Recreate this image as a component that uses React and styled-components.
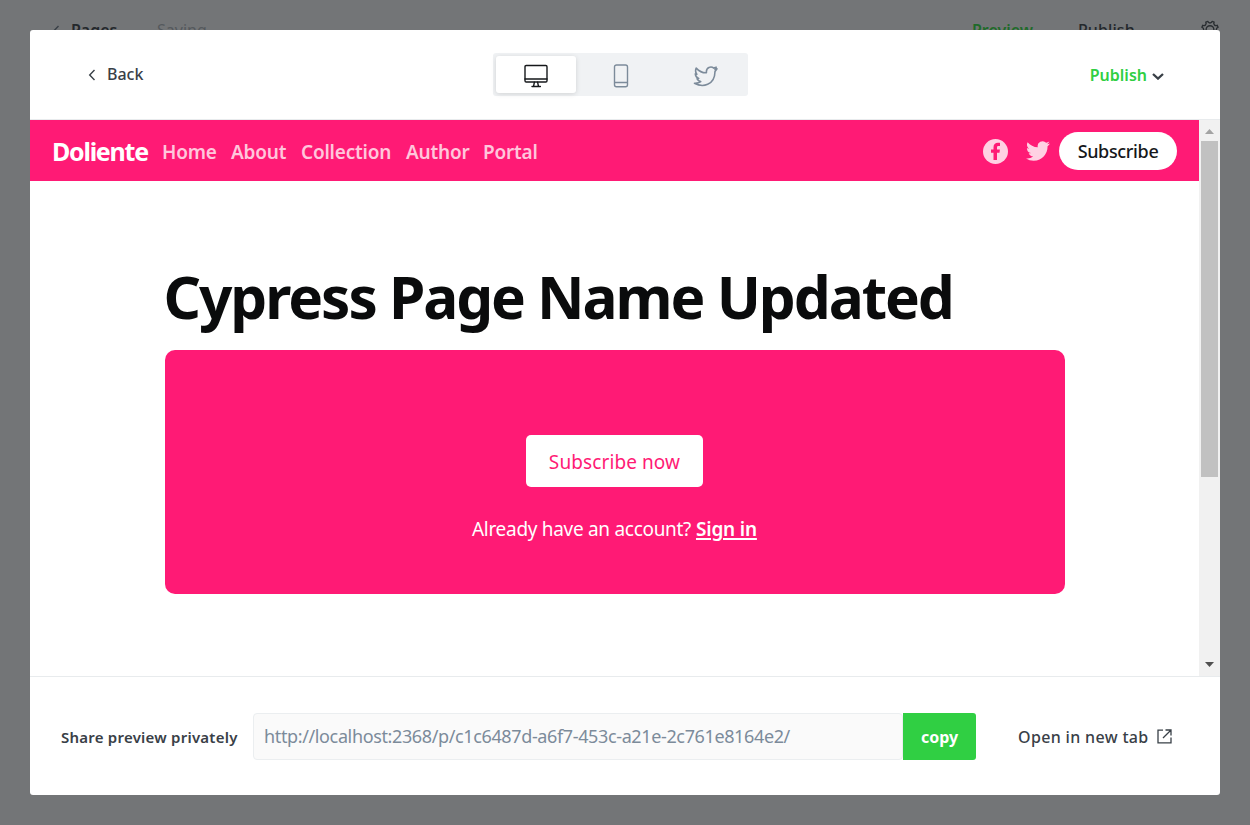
import React from "react";
import styled, { createGlobalStyle } from "styled-components";

const GlobalStyle = createGlobalStyle`
  * { box-sizing: border-box; }
  html, body { margin: 0; height: 100%; overflow: hidden; }
  body { background: #737577; font-family: "Noto Sans", "Open Sans", sans-serif; color: #394047; }
  button { font-family: inherit; border: 0; padding: 0; background: none; color: inherit; }
  svg { display: block; flex: none; }
`;

const Screen = styled.div`
  position: relative;
  width: 1250px;
  height: 825px;
  background: #737577;
`;

const EditorBar = styled.header`
  display: flex;
  align-items: center;
  height: 60px;
  padding: 0 30px 0 52px;
`;

const Label = styled.span`
  display: block;
  flex: none;
  white-space: nowrap;
  width: ${(p) => (p.$w ? `${p.$w}px` : "auto")};
  padding-top: ${(p) => p.$drop || 0}px;
  font-size: ${(p) => p.$size || 16}px;
  font-weight: ${(p) => p.$weight || 400};
  letter-spacing: ${(p) => p.$track || 0}px;
  color: ${(p) => p.$color || "inherit"};
  line-height: 1.4;
`;

const Modal = styled.main`
  position: absolute;
  inset: 30px;
  display: flex;
  flex-direction: column;
  background: #fff;
  border-radius: 3px;
  overflow: hidden;
`;

const ModalHeader = styled.div`
  display: grid;
  grid-template-columns: 405px 255px 1fr;
  align-items: center;
  height: 90px;
  flex: none;
  padding: 0 56px 0 58px;
  border-bottom: 1px solid #e8ebed;
`;

const BackButton = styled.button`
  display: flex;
  align-items: center;
  gap: 11px;
`;

const Devices = styled.div`
  display: flex;
  height: 43px;
  padding: 3px 0 3px 3px;
  border-radius: 3px;
  background: #f0f2f4;
`;

const Device = styled.button`
  display: flex;
  flex: none;
  align-items: center;
  justify-content: center;
  width: ${(p) => (p.$active ? 80 : 85)}px;
  height: 37px;
  padding-top: 3px;
  margin-right: ${(p) => (p.$active ? 2 : 0)}px;
  border-radius: 3px;
  color: ${(p) => (p.$active ? "#15171a" : "#7c8b9a")};
  background: ${(p) => (p.$active ? "#fff" : "transparent")};
  box-shadow: ${(p) => (p.$active ? "0 1px 5px rgba(0, 0, 0, 0.13)" : "none")};
`;

const PublishMenu = styled.button`
  display: flex;
  align-items: center;
  justify-self: end;
  gap: 5px;
  padding-top: 2px;
`;

const Preview = styled.section`
  display: flex;
  height: 556px;
  flex: none;
`;

const Site = styled.div`
  width: 1169px;
  flex: none;
`;

const SiteNav = styled.nav`
  display: flex;
  align-items: center;
  height: 61px;
  padding: 1px 22px 0 22px;
  background: #ff1a75;
  color: #fff;
`;

const NavLinks = styled.div`
  display: flex;
  flex: 1;
  padding-left: 15px;
`;

const Social = styled.div`
  display: flex;
  align-items: center;
  gap: 18px;
  margin-right: 9px;
  color: #ffd1e3;
`;

const SubscribePill = styled.button`
  display: flex;
  align-items: center;
  justify-content: center;
  width: 118px;
  height: 38px;
  border-radius: 19px;
  background: #fff;
  color: #15171a;
`;

const Article = styled.article`
  width: 900px;
  margin: 0 auto;
  padding-top: 75px;
`;

const Title = styled.h1`
  margin: 0 0 14px;
  height: 80px;
  line-height: 80px;
  font-size: 58.5px;
  font-weight: 700;
  letter-spacing: -2.05px;
  text-indent: -1px;
  white-space: nowrap;
  color: #0a0b0c;
`;

const SignupCard = styled.div`
  display: flex;
  flex-direction: column;
  align-items: center;
  height: 244px;
  padding-top: 85px;
  border-radius: 10px;
  background: #ff1a75;
  color: #fff;
`;

const SignupButton = styled.button`
  display: flex;
  align-items: center;
  justify-content: center;
  width: 177px;
  height: 52px;
  margin-bottom: 29px;
  border-radius: 5px;
  background: #fff;
  color: #ff1a75;
`;

const SigninLine = styled.div`
  display: flex;
  width: 285px;
`;

const SigninLink = styled(Label)`
  text-decoration: underline;
  text-decoration-thickness: 2px;
  text-underline-offset: 2px;
`;

const Scrollbar = styled.div`
  display: flex;
  flex-direction: column;
  align-items: center;
  width: 21px;
  padding: 9px 0;
  background: #f1f1f1;
`;

const Thumb = styled.div`
  width: 17px;
  height: 336px;
  margin: 7px 0 auto;
  background: #c1c1c1;
`;

const Footer = styled.footer`
  display: flex;
  align-items: center;
  height: 119px;
  padding: 1px 0 0 31px;
  border-top: 1px solid #e8ebed;
`;

const UrlField = styled.div`
  display: flex;
  align-items: center;
  width: 650px;
  height: 47px;
  padding-left: 10px;
  border: 1px solid #ebeef0;
  border-radius: 4px;
  background: #fafafa;
`;

const CopyButton = styled.button`
  display: flex;
  align-items: center;
  justify-content: center;
  width: 73px;
  height: 47px;
  margin-right: 42px;
  border-radius: 0 3px 3px 0;
  background: #30cf43;
  color: #fff;
`;

const TWITTER =
  "M23.954 4.569a10 10 0 0 1-2.825.775 4.958 4.958 0 0 0 2.163-2.723c-.951.555-2.005.959-3.127 1.184a4.92 4.92 0 0 0-8.384 4.482C7.691 8.094 4.066 6.13 1.64 3.161a4.822 4.822 0 0 0-.666 2.475c0 1.71.87 3.213 2.188 4.096a4.904 4.904 0 0 1-2.228-.616v.061a4.923 4.923 0 0 0 3.946 4.827 4.996 4.996 0 0 1-2.212.085 4.937 4.937 0 0 0 4.604 3.417 9.868 9.868 0 0 1-6.102 2.105c-.39 0-.779-.023-1.17-.067a13.995 13.995 0 0 0 7.557 2.209c9.054 0 13.999-7.496 13.999-13.986 0-.209 0-.42-.015-.63a9.936 9.936 0 0 0 2.46-2.548z";

const ChevronLeft = () => (
  <svg width="8" height="14" viewBox="0 0 8 14" fill="none" stroke="#394047" strokeWidth="1.4">
    <path d="M6.5 3 1.7 8l4.8 5" />
  </svg>
);

const Desktop = () => (
  <svg width="24" height="24" viewBox="0 0 24 24" fill="none" stroke="currentColor" strokeWidth="1.4" strokeLinejoin="round" strokeLinecap="round">
    <rect x="1" y="1.500" width="22" height="16.500" rx="1.200" />
    <path d="M1 15h22M10.400 18.200 9.600 22.200M13.600 18.200l.8 4M8 22.500h8.400" />
  </svg>
);

const Phone = () => (
  <svg width="24" height="24" viewBox="0 0 24 24" fill="none" stroke="currentColor" strokeWidth="1.400">
    <rect x="5.500" y="1" width="13" height="21.800" rx="2" />
    <path d="M5.500 18.500h13" />
  </svg>
);

const BirdOutline = () => (
  <svg width="25" height="24" viewBox="0 0 25 24" fill="none" stroke="currentColor" strokeWidth="1.600" strokeLinejoin="round" strokeLinecap="round">
    <path d="m24 4.800-2 .7 1.200-2.300-2.400.9c-3.100-2.500-7.400-.5-7.400 3.500v1.200C9.600 9 6.200 7.300 3.200 4.100c-.9 2.200-.7 4.500.6 6.200l-1.500-.4c.2 2.200 1.400 3.900 3.400 4.600l-1.600.4c.7 1.500 2 2.400 3.600 2.700-1.400 1.200-3.600 1.700-6.200 1.600 8 4.600 20.300 2.300 20.500-11.700z" />
  </svg>
);

const ChevronDown = () => (
  <svg width="12" height="9" viewBox="0 0 12 9" fill="none" stroke="#394047" strokeWidth="2.300">
    <path d="M1 3 6 7.600 11 3" />
  </svg>
);

const Facebook = () => (
  <svg width="25" height="25" viewBox="0 0 25 25">
    <circle cx="12.500" cy="12.500" r="12.500" fill="currentColor" />
    <path fill="#ff1a75" d="M10.500 21v-7.200H8v-3.300h2.500V8.400c0-3 1.700-4.600 4.400-4.600.9 0 1.800.1 2.100.1v3h-1.500c-1.200 0-1.500.6-1.500 1.400v2.200h2.900l-.4 3.300h-2.500V21z" />
  </svg>
);

const Bird = () => (
  <svg width="24" height="24" viewBox="0 0 24 24" fill="currentColor">
    <path d={TWITTER} />
  </svg>
);

const Gear = () => (
  <svg width="22" height="22" viewBox="0 0 24 24" fill="none" stroke="#292d31" strokeWidth="1.500" strokeLinejoin="round">
    <path d="M9.700 2.600a2.400 2.400 0 0 0 4.600 0l2.200.9a2.400 2.400 0 0 0 3.300 3.300l1 2.300a2.400 2.400 0 0 0 0 4.700l-1 2.300a2.400 2.400 0 0 0-3.300 3.300l-2.200.9a2.400 2.400 0 0 0-4.600 0l-2.300-.9a2.400 2.400 0 0 0-3.300-3.300l-.9-2.300a2.400 2.400 0 0 0 0-4.700l.9-2.300a2.400 2.400 0 0 0 3.300-3.300z" />
    <circle cx="12" cy="11.500" r="4.200" />
  </svg>
);

const External = () => (
  <svg width="15" height="15" viewBox="0 0 15 15" fill="none" stroke="#394047" strokeWidth="1.300">
    <path d="M6 1.200H1v12.600h13V8.500M8.500 1h5.500v5.500M13.800 1.200 6 9" />
  </svg>
);

const Arrow = ({ up }) => (
  <svg width="9" height="5" viewBox="0 0 9 5" fill={up ? "#a3a3a3" : "#505050"}>
    <path d={up ? "M0 5h9L4.500 0z" : "M0 0h9L4.500 5z"} />
  </svg>
);

const links = [
  ["Home", 69],
  ["About", 70],
  ["Collection", 105],
  ["Author", 77],
  ["Portal", 60],
];

export default function App() {
  return (
    <>
      <GlobalStyle />
      <Screen>
        <EditorBar>
          <ChevronLeft />
          <Label $w={11} />
          <Label $w={86} $weight={600} $color="#24282c">Pages</Label>
          <Label $w={815} $color="#55595d">Saving</Label>
          <Label $w={106} $weight={600} $color="#1f6b2a">Preview</Label>
          <Label $w={121} $weight={500} $track={0.1} $color="#24282c">Publish</Label>
          <Gear />
        </EditorBar>
        <Modal>
          <ModalHeader>
            <BackButton>
              <ChevronLeft />
              <Label $weight={500}>Back</Label>
            </BackButton>
            <Devices>
              <Device $active><Desktop /></Device>
              <Device><Phone /></Device>
              <Device><BirdOutline /></Device>
            </Devices>
            <PublishMenu>
              <Label $weight={600} $color="#30cf43">Publish</Label>
              <ChevronDown />
            </PublishMenu>
          </ModalHeader>
          <Preview>
            <Site>
              <SiteNav>
                <Label $weight={700} $size={25} $w={95} $track={-1.25}>Doliente</Label>
                <NavLinks>
                  {links.map(([name, width]) => (
                    <Label key={name} $w={width} $drop={2} $weight={600} $size={19} $track={-0.2} $color="#ffc6dc">{name}</Label>
                  ))}
                </NavLinks>
                <Social>
                  <Facebook />
                  <Bird />
                </Social>
                <SubscribePill><Label $size={18} $drop={2} $weight={500} $track={-0.35}>Subscribe</Label></SubscribePill>
              </SiteNav>
              <Article>
                <Title>Cypress Page Name Updated</Title>
                <SignupCard>
                  <SignupButton><Label $size={19} $drop={2} $weight={450} $track={0.1}>Subscribe now</Label></SignupButton>
                  <SigninLine>
                    <Label $size={19} $w={224} $track={-0.3}>Already have an account?</Label>
                    <SigninLink $size={19} $weight={600} $track={-0.2}>Sign in</SigninLink>
                  </SigninLine>
                </SignupCard>
              </Article>
            </Site>
            <Scrollbar>
              <Arrow up />
              <Thumb />
              <Arrow />
            </Scrollbar>
          </Preview>
          <Footer>
            <Label $size={15} $drop={2} $weight={600} $w={192} $track={0.23}>Share preview privately</Label>
            <UrlField><Label $size={18} $track={-0.37} $color="#7c8b9a">http://localhost:2368/p/c1c6487d-a6f7-453c-a21e-2c761e8164e2/</Label></UrlField>
            <CopyButton><Label $drop={2} $weight={700}>copy</Label></CopyButton>
            <Label $drop={2} $weight={500} $w={139} $track={0.34}>Open in new tab</Label>
            <External />
          </Footer>
        </Modal>
      </Screen>
    </>
  );
}
